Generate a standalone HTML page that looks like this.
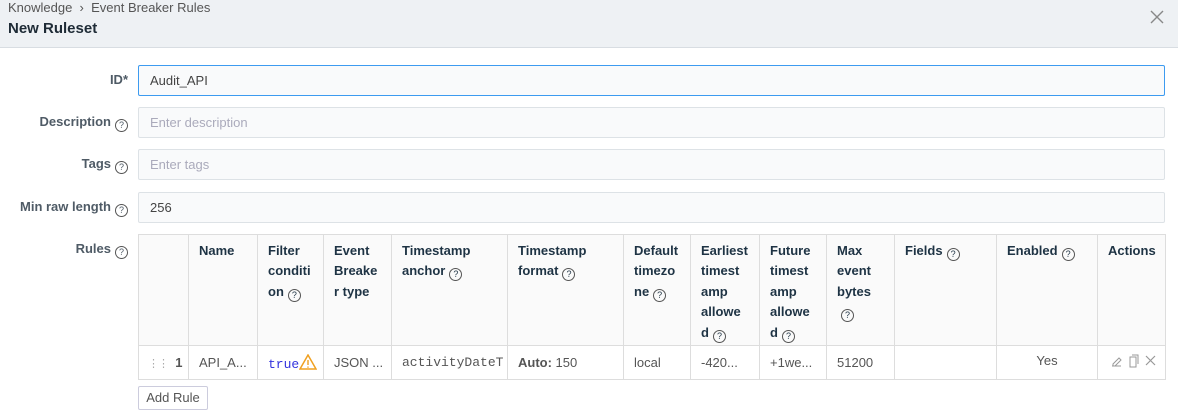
<!DOCTYPE html>
<html><head><meta charset="utf-8"><style>
*{box-sizing:border-box;margin:0;padding:0}
body{width:1178px;height:416px;background:#fff;font-family:"Liberation Sans",sans-serif;font-size:13px;color:#555;position:relative;overflow:hidden}
.hdr{position:absolute;left:0;top:0;width:1178px;height:48px;background:#eef1f4;border-bottom:1px solid #d8dde2}
.bc{position:absolute;left:8px;top:0px;font-size:13px;color:#555}
.ttl{position:absolute;left:8px;top:20px;font-size:15px;font-weight:bold;color:#1e2b36}
.x{position:absolute;left:1150px;top:10px}
.lbl{position:absolute;right:1050px;font-weight:bold;color:#4f5b66;font-size:13px;white-space:nowrap}
.q{display:inline-block;width:13px;height:13px;border:1px solid #555;border-radius:50%;font-size:9px;line-height:11px;text-align:center;font-weight:normal;vertical-align:-2px;margin-left:4px}
.in{position:absolute;left:138px;width:1027px;height:31px;border:1px solid #dde2e6;border-radius:2px;background:#f9fafb;padding-left:11px;line-height:29px;font-size:13px;color:#444}
.ph{color:#aab}
table{position:absolute;left:138px;top:234px;border-collapse:collapse;table-layout:fixed;width:1027px}
th,td{border:1px solid #ddd;text-align:left;vertical-align:top}
th{background:#fafafa;font-weight:bold;color:#1e3344;padding:6px 10px 2px;line-height:20.4px;height:111px;font-size:13px}
td{height:34px;vertical-align:middle;padding:0 10px;color:#555;white-space:nowrap;overflow:hidden}
.mono{font-family:"Liberation Mono",monospace}
.btn{position:absolute;left:138px;top:386px;width:70px;height:24px;border:1px solid #ccd;border-radius:2px;text-align:center;line-height:22px;color:#555;background:#fff}
</style></head><body>
<div class="hdr"><div class="bc">Knowledge &nbsp;›&nbsp; Event Breaker Rules</div><div class="ttl">New Ruleset</div>
<svg class="x" width="14" height="14" viewBox="0 0 14 14"><path d="M1 1L13 13M13 1L1 13" stroke="#888" stroke-width="1.4"/></svg></div>
<div class="lbl" style="top:72px">ID*</div>
<div class="in" style="top:65px;border-color:#3d9bf0;border-width:1.5px">Audit_API</div>
<div class="lbl" style="top:114px">Description<span class="q">?</span></div>
<div class="in ph" style="top:107px"><span class="ph">Enter description</span></div>
<div class="lbl" style="top:156px">Tags<span class="q">?</span></div>
<div class="in" style="top:149px"><span class="ph">Enter tags</span></div>
<div class="lbl" style="top:199px">Min raw length<span class="q">?</span></div>
<div class="in" style="top:192px">256</div>
<div class="lbl" style="top:241px">Rules<span class="q">?</span></div>
<table>
<colgroup><col style="width:50px"><col style="width:69px"><col style="width:66px"><col style="width:68px"><col style="width:116px"><col style="width:116px"><col style="width:67px"><col style="width:69px"><col style="width:67px"><col style="width:68px"><col style="width:102px"><col style="width:101px"><col style="width:68px"></colgroup>
<tr><th></th><th>Name</th><th>Filter conditi on<span class="q">?</span></th><th>Event Breake r type</th><th>Timestamp anchor<span class="q">?</span></th><th>Timestamp format<span class="q">?</span></th><th>Default timezo ne<span class="q">?</span></th><th>Earliest timest amp allowe d<span class="q">?</span></th><th>Future timest amp allowe d<span class="q">?</span></th><th>Max event bytes <span class="q">?</span></th><th>Fields<span class="q">?</span></th><th>Enabled<span class="q">?</span></th><th>Actions</th></tr>
<tr><td style="padding-left:9px"><span style="color:#aaa;letter-spacing:-1px;font-size:11px">⋮⋮</span>&nbsp;&nbsp;<b style="color:#555">1</b></td><td>API_A...</td><td class="mono" style="color:#3333dd">true<svg width="18" height="16" viewBox="0 0 18 16" style="vertical-align:-2px"><path d="M9 1L17 15H1Z" fill="none" stroke="#f0a020" stroke-width="1.5"/><path d="M9 6v5M9 12.5v1.2" stroke="#f0a020" stroke-width="1.4"/></svg></td><td>JSON ...</td><td class="mono">activityDateT</td><td><b>Auto:</b> 150</td><td>local</td><td>-420...</td><td>+1we...</td><td>51200</td><td></td><td style="text-align:center;vertical-align:top;padding-top:7px">Yes</td><td style="padding-left:12px"><svg width="50" height="14" viewBox="0 0 50 14"><path d="M2 12h9M3 10l6-6 2 2-6 6H3z" fill="none" stroke="#999"/><path d="M20 3h6v10h-6zM22 1h6v9" fill="none" stroke="#999"/><path d="M36 2l9 9M45 2l-9 9" stroke="#999" stroke-width="1.2"/></svg></td></tr>
</table>
<div class="btn">Add Rule</div>
</body></html>
